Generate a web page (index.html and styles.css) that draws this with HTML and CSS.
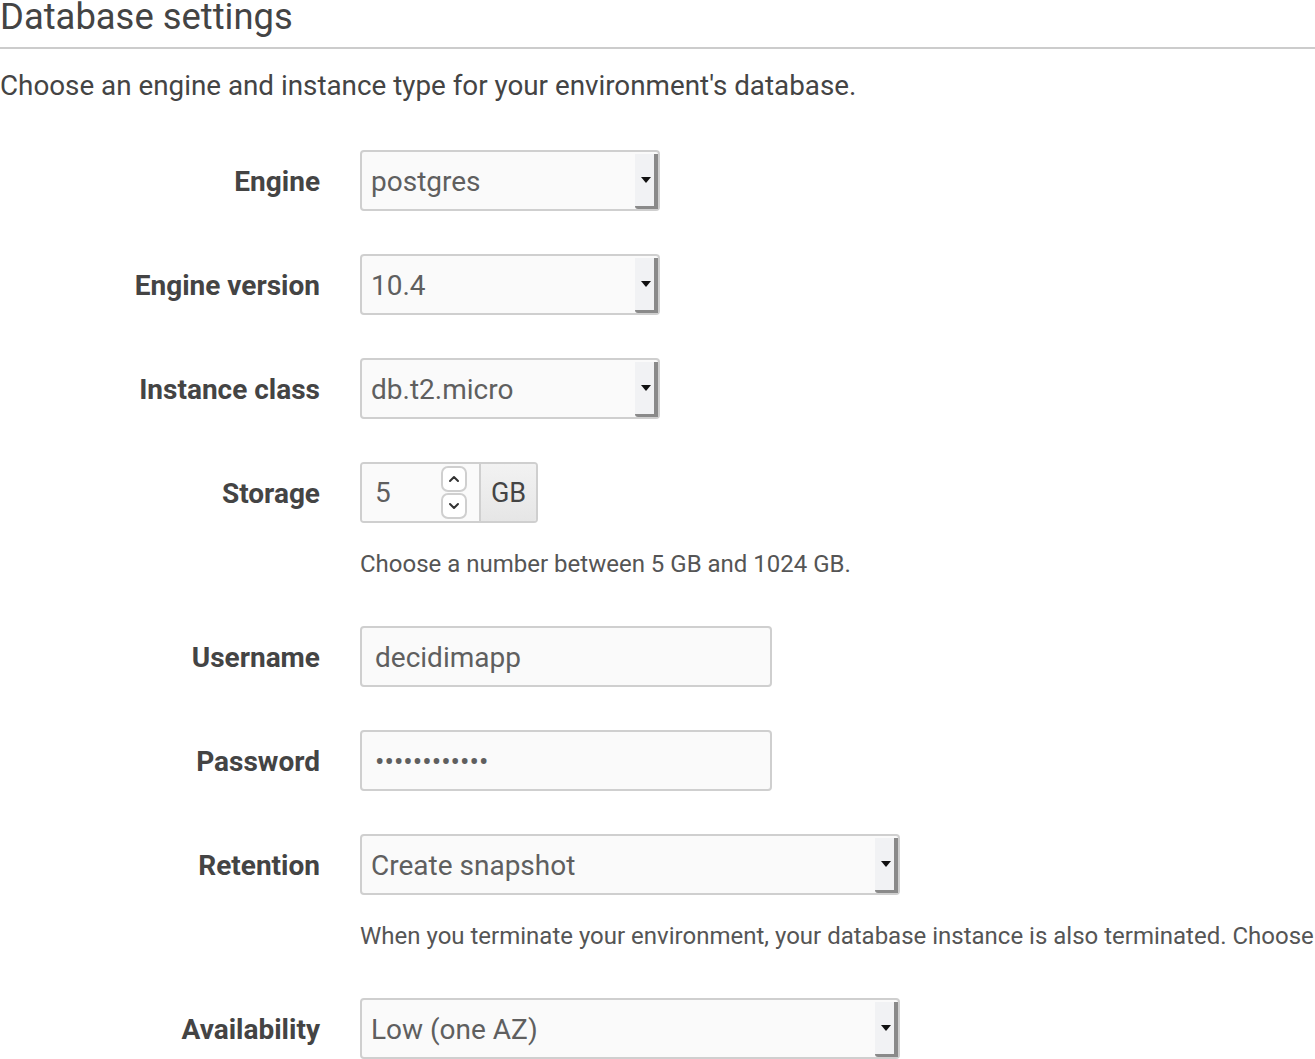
FILE: index.html
```html
<!DOCTYPE html>
<html>
<head>
<meta charset="utf-8">
<link rel="stylesheet" href="styles.css">
</head>
<body>
<div class="page">
  <h2 class="title">Database settings</h2>
  <p class="intro">Choose an engine and instance type for your environment's database.</p>

  <div class="form">
    <div class="row">
      <div class="label">Engine</div>
      <div class="field">
        <div class="select w300"><span class="value">postgres</span><span class="arrow"><span class="tri"></span></span></div>
      </div>
    </div>

    <div class="row">
      <div class="label">Engine version</div>
      <div class="field">
        <div class="select w300"><span class="value">10.4</span><span class="arrow"><span class="tri"></span></span></div>
      </div>
    </div>

    <div class="row">
      <div class="label">Instance class</div>
      <div class="field">
        <div class="select w300"><span class="value">db.t2.micro</span><span class="arrow"><span class="tri"></span></span></div>
      </div>
    </div>

    <div class="row">
      <div class="label">Storage</div>
      <div class="field">
        <div class="group">
          <div class="number">
            <span class="num">5</span>
            <span class="spin">
              <span class="spinbtn"><svg width="12" height="8" viewBox="0 0 12 8"><path d="M2 6 L6 2 L10 6" fill="none" stroke="#333" stroke-width="2" stroke-linecap="round" stroke-linejoin="round"/></svg></span>
              <span class="spinbtn"><svg width="12" height="8" viewBox="0 0 12 8"><path d="M2 2 L6 6 L10 2" fill="none" stroke="#333" stroke-width="2" stroke-linecap="round" stroke-linejoin="round"/></svg></span>
            </span>
          </div>
          <div class="addon">GB</div>
        </div>
        <div class="help">Choose a number between 5 GB and 1024 GB.</div>
      </div>
    </div>

    <div class="row">
      <div class="label">Username</div>
      <div class="field">
        <div class="input w412"><span class="text">decidimapp</span></div>
      </div>
    </div>

    <div class="row">
      <div class="label">Password</div>
      <div class="field">
        <div class="input w412"><span class="dots">••••••••••••</span></div>
      </div>
    </div>

    <div class="row">
      <div class="label">Retention</div>
      <div class="field">
        <div class="select w540"><span class="value">Create snapshot</span><span class="arrow"><span class="tri"></span></span></div>
        <div class="help">When you terminate your environment, your database instance is also terminated. Choose</div>
      </div>
    </div>

    <div class="row">
      <div class="label">Availability</div>
      <div class="field">
        <div class="select w540"><span class="value">Low (one AZ)</span><span class="arrow"><span class="tri"></span></span></div>
      </div>
    </div>
  </div>
</div>
</body>
</html>
```

FILE: styles.css
```css
html, body {
  margin: 0;
  padding: 0;
  background: #fff;
  overflow: hidden;
}
body {
  font-family: Roboto, "Liberation Sans", Arial, sans-serif;
  color: #444;
}
.page {
  width: 1315px;
}
.title {
  margin: -4px 0 0 0;
  font-size: 36.4px;
  font-weight: 400;
  line-height: 42px;
  color: #444;
  padding-bottom: 9px;
  border-bottom: 2px solid #ccc;
}
.intro {
  margin: 21px 0 0 0;
  font-size: 27.8px;
  line-height: 32px;
  color: #444;
}
.form {
  margin-top: 48px;
  display: flex;
  flex-direction: column;
  gap: 43px;
}
.row {
  display: flex;
  align-items: flex-start;
  gap: 40px;
}
.label {
  width: 320px;
  flex: none;
  text-align: right;
  font-weight: 700;
  font-size: 28px;
  line-height: 64px;
  height: 61px;
  color: #444;
}
.field {
  display: flex;
  flex-direction: column;
  white-space: nowrap;
}
.select, .input {
  box-sizing: border-box;
  height: 61px;
  border: 2px solid #cfcfcf;
  border-radius: 4px;
  background: #fafafa;
  display: flex;
  align-items: stretch;
  font-size: 28px;
  color: #5f5f5f;
}
.w300 { width: 300px; }
.w412 { width: 412px; }
.w540 { width: 540px; }
.select .value {
  flex: 1;
  padding-left: 9px;
  line-height: 59px;
}
.select .arrow {
  width: 19px;
  margin: 2px 0 0 0;
  background: #f1f2f4;
  border-right: 4px solid #8a8a8a;
  border-bottom: 3px solid #8a8a8a;
  border-bottom-left-radius: 3px;
  display: flex;
  align-items: center;
  justify-content: center;
}
.tri {
  width: 0;
  height: 0;
  border-left: 5px solid transparent;
  border-right: 5px solid transparent;
  border-top: 6px solid #111;
  margin-left: 2px;
}
.input .text {
  padding-left: 13px;
  line-height: 59px;
}
.input .dots {
  padding-left: 13px;
  line-height: 59px;
  font-size: 28px;
  letter-spacing: 0px;
  color: #5f5f5f;
}
.group {
  display: flex;
  height: 61px;
  box-sizing: border-box;
  width: 178px;
  border: 2px solid #cfcfcf;
  border-radius: 4px;
  overflow: hidden;
}
.number {
  width: 117px;
  background: #fafafa;
  display: flex;
  align-items: center;
  justify-content: space-between;
  padding: 0 12px 0 13px;
  box-sizing: border-box;
  font-size: 28px;
  color: #5f5f5f;
}
.spin {
  display: flex;
  flex-direction: column;
  gap: 1px;
}
.spinbtn {
  width: 22px;
  height: 22px;
  border: 2px solid #cfcfcf;
  border-radius: 7px;
  background: #fff;
  display: flex;
  align-items: center;
  justify-content: center;
}
.addon {
  flex: 1;
  border-left: 2px solid #cfcfcf;
  background: linear-gradient(#f2f2f2, #e6e6e6);
  font-size: 27px;
  color: #444;
  display: flex;
  align-items: center;
  justify-content: center;
}
.help {
  margin-top: 28px;
  font-size: 24px;
  line-height: 26px;
  color: #555;
  margin-bottom: 6px;
}
```
